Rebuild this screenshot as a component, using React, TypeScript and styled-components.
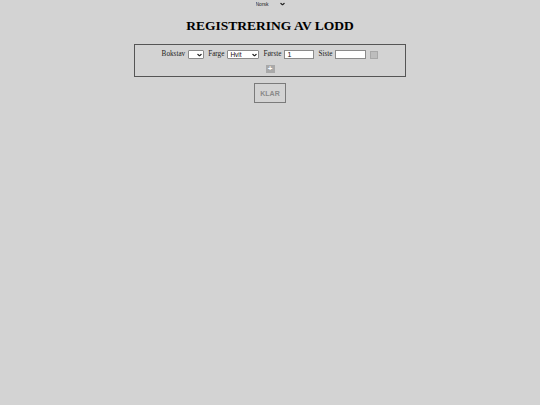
import React, { useState } from 'react';
import styled, { createGlobalStyle } from 'styled-components';

const GlobalStyle = createGlobalStyle`
  html, body {
    margin: 0;
    padding: 0;
    background-color: #d3d3d3;
  }
  body {
    font-family: "Liberation Serif", "Times New Roman", serif;
  }
`;

function Chevron({ size = 5 }: { size?: number }) {
  return (
    <svg width={size} height={size * 0.6} viewBox="0 0 10 6" fill="none">
      <path d="M1 1 L5 5 L9 1" stroke="#222" strokeWidth="2.2" />
    </svg>
  );
}

export default function App() {
  const [lang, setLang] = useState('Norsk');
  const [farge, setFarge] = useState('Hvit');
  const [forste, setForste] = useState('1');
  const [siste, setSiste] = useState('');

  return (
    <>
      <GlobalStyle />
      <Page>
        <LangWrap>
          <LangSelect value={lang} onChange={(e) => setLang(e.target.value)}>
            <option>Norsk</option>
            <option>English</option>
          </LangSelect>
          <ArrowSpot right={2}>
            <Chevron size={5} />
          </ArrowSpot>
        </LangWrap>

        <Title>REGISTRERING AV LODD</Title>

        <Panel>
          <Row>
            <Field>
              <Label>Bokstav</Label>
              <SelectWrap width={16}>
                <SmallSelect defaultValue="">
                  <option value=""></option>
                  <option>A</option>
                  <option>B</option>
                </SmallSelect>
                <ArrowSpot right={2}>
                  <Chevron size={5} />
                </ArrowSpot>
              </SelectWrap>
            </Field>
            <Field>
              <Label>Farge</Label>
              <SelectWrap width={32}>
                <SmallSelect value={farge} onChange={(e) => setFarge(e.target.value)}>
                  <option>Hvit</option>
                  <option>Rød</option>
                  <option>Blå</option>
                </SmallSelect>
                <ArrowSpot right={2}>
                  <Chevron size={5} />
                </ArrowSpot>
              </SelectWrap>
            </Field>
            <Field>
              <Label>Første</Label>
              <TextInput width={30} value={forste} onChange={(e) => setForste(e.target.value)} />
            </Field>
            <Field>
              <Label>Siste</Label>
              <TextInput width={31} value={siste} onChange={(e) => setSiste(e.target.value)} />
            </Field>
            <RemoveButton disabled aria-label="Fjern" />
          </Row>
          <Row>
            <AddButton aria-label="Legg til">+</AddButton>
          </Row>
        </Panel>

        <DoneButton disabled>KLAR</DoneButton>
      </Page>
    </>
  );
}

const Page = styled.div`
  display: flex;
  flex-direction: column;
  align-items: center;
  min-height: 100vh;
`;

const LangWrap = styled.div`
  position: relative;
  width: 33px;
  height: 8px;
  line-height: 8px;
`;

const LangSelect = styled.select`
  appearance: none;
  display: block;
  box-sizing: border-box;
  width: 100%;
  height: 8px;
  margin: 0;
  border: none;
  background: transparent;
  padding: 0 0 0 2px;
  font-family: "Liberation Sans", Arial, sans-serif;
  font-size: 5px;
  line-height: 8px;
  color: #222;
  outline: none;
`;

const ArrowSpot = styled.span<{ right: number }>`
  position: absolute;
  right: ${(p) => p.right}px;
  top: 50%;
  transform: translateY(-50%);
  display: flex;
  pointer-events: none;
`;

const Title = styled.h1`
  margin: 10px 0 11px;
  font-size: 13.5px;
  line-height: 15px;
  font-weight: bold;
  color: #000;
`;

const Panel = styled.div`
  box-sizing: border-box;
  width: 272px;
  border: 1px solid #555;
  padding: 5px 0 3px;
  display: flex;
  flex-direction: column;
  gap: 5px;
`;

const Row = styled.div`
  display: flex;
  justify-content: center;
  align-items: center;
  gap: 4px;
  height: 9px;
`;

const Field = styled.div`
  display: flex;
  align-items: center;
  gap: 3px;
`;

const Label = styled.span`
  font-size: 7.2px;
  line-height: 9px;
  color: #222;
`;

const SelectWrap = styled.div<{ width: number }>`
  position: relative;
  width: ${(p) => p.width}px;
  height: 9px;
  line-height: 9px;
`;

const SmallSelect = styled.select`
  appearance: none;
  display: block;
  box-sizing: border-box;
  width: 100%;
  height: 9px;
  margin: 0;
  border: 1px solid #8a8a8a;
  border-radius: 1px;
  background: #fff;
  padding: 0 0 0 2px;
  font-family: "Liberation Sans", Arial, sans-serif;
  font-size: 6.5px;
  line-height: 7px;
  color: #111;
  outline: none;
`;

const TextInput = styled.input<{ width: number }>`
  display: block;
  box-sizing: border-box;
  width: ${(p) => p.width}px;
  height: 9px;
  margin: 0;
  border: 1px solid #8a8a8a;
  background: #fff;
  padding: 0 2px;
  font-family: "Liberation Sans", Arial, sans-serif;
  font-size: 7px;
  color: #111;
  outline: none;
`;

const RemoveButton = styled.button`
  display: block;
  box-sizing: border-box;
  width: 8px;
  height: 8px;
  margin: 0;
  padding: 0;
  border: 1px solid #a8a8a8;
  background: #bdbdbd;
`;

const AddButton = styled.button`
  display: flex;
  align-items: center;
  justify-content: center;
  box-sizing: border-box;
  width: 9px;
  height: 8px;
  margin: 0;
  padding: 0;
  border: none;
  background: #a9a9a9;
  color: #fff;
  font-family: "Liberation Sans", Arial, sans-serif;
  font-weight: bold;
  font-size: 8px;
  line-height: 8px;
`;

const DoneButton = styled.button`
  box-sizing: border-box;
  margin-top: 6px;
  width: 32px;
  height: 20px;
  padding: 0;
  border: 1px solid #7a7a7a;
  background: transparent;
  color: #8a8a8a;
  font-family: "Liberation Sans", Arial, sans-serif;
  font-weight: bold;
  font-size: 7px;
`;
